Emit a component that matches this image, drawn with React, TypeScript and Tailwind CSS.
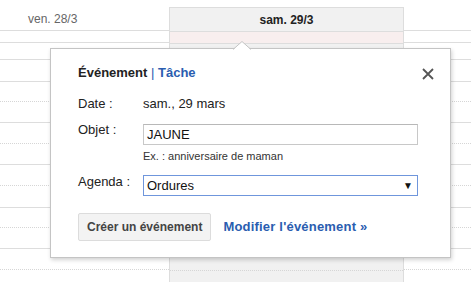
import React from "react";

const line = "border-b border-[#dddddd]";
const dotted = "border-b border-dotted border-[#d6d6d6]";

// grid rows under the header, heights tuned so lines fall on the screenshot's y
const rowClasses = [
  `h-[12px] ${line}`,
  `h-[17px] ${line}`,
  `h-[22px] ${line}`,
  `h-[20px] ${dotted}`,
  `h-[21px] ${line}`,
  `h-[21px] ${dotted}`,
  `h-[21px] ${line}`,
  `h-[21px] ${dotted}`,
  `h-[22px] ${line}`,
  `h-[20px] ${dotted}`,
  `h-[21px] ${line}`,
  `h-[21px] ${dotted}`,
];

function Rows({ selected }: { selected?: boolean }) {
  return (
    <>
      {rowClasses.map((c, i) => (
        <div
          key={i}
          className={
            c + (selected ? (i === 0 ? " bg-[#f8eeee]" : " bg-[#f1f1f1]") : "")
          }
        />
      ))}
      <div className={"flex-1" + (selected ? " bg-[#f1f1f1]" : "")} />
    </>
  );
}

function CalendarGrid() {
  return (
    <div className="flex h-[282px] w-[471px] text-[12px]">
      <div className="flex w-[169px] flex-col">
        <div className={`flex h-[31px] items-center pl-[28px] pt-[7px] text-[#666666] ${line}`}>
          ven. 28/3
        </div>
        <Rows />
      </div>
      <div className="flex w-[235px] flex-col pt-[7px]">
        <div className="flex flex-1 flex-col border-x border-t border-[#dddddd]">
          <div className={`flex h-[24px] items-center justify-center bg-[#f1f1f1] font-bold text-[#222222] ${line}`}>
            sam. 29/3
          </div>
          <Rows selected />
        </div>
      </div>
      <div className="flex flex-1 flex-col">
        <div className={`h-[31px] ${line}`} />
        <Rows />
      </div>
    </div>
  );
}

function EventBubble() {
  return (
    <div className="absolute left-[50px] top-[48px] w-[401px] border border-[#c4c4c4] bg-white pb-[16px] pl-[27px] pr-[32px] pt-[16px] text-[13px] text-[#222222] shadow-[1px_2px_4px_rgba(0,0,0,0.18)]">
      {/* little arrow pointing at the day column */}
      <svg
        className="absolute left-[182px] top-[-8px]"
        width="18"
        height="9"
        viewBox="0 0 18 9"
      >
        <polygon points="0,9 9,0.5 18,9" fill="white" />
        <polyline points="0,8.5 9,0.5 18,8.5" fill="none" stroke="#c4c4c4" strokeWidth="1" />
      </svg>

      <div className="flex h-[16px] items-center justify-between leading-[16px]">
        <div>
          <span className="font-bold">Événement</span>
          <span className="text-[#2a5db0]"> | </span>
          <span className="font-bold text-[#2a5db0]">Tâche</span>
        </div>
        <svg className="mr-[-16px] mt-[2px]" width="12" height="12" viewBox="0 0 12 12">
          <path d="M1 1 L11 11 M11 1 L1 11" stroke="#555555" strokeWidth="1.8" />
        </svg>
      </div>

      <div className="mt-[15px] flex h-[16px] items-center leading-[16px]">
        <div className="w-[65px]">Date :</div>
        <div>sam., 29 mars</div>
      </div>

      <div className="mt-[12px] flex items-start">
        <div className="mt-[-2px] w-[65px] leading-[16px]">Objet :</div>
        <div className="flex-1">
          <div className="flex h-[21px] w-[275px] items-center border border-[#c8c8c8] border-t-[#b8b8b8] px-[3px] text-[13px] text-[#111111]">
            JAUNE
          </div>
          <div className="mt-[5px] text-[11px] leading-[13px] text-[#333333]">
            Ex. : anniversaire de maman
          </div>
        </div>
      </div>

      <div className="mt-[12px] flex items-center">
        <div className="mt-[-8px] w-[65px] leading-[16px]">Agenda :</div>
        <div className="flex h-[21px] w-[275px] items-center justify-between border border-[#6f96dc] pl-[3px] pr-[4px] text-[13px] text-[#111111]">
          <span>Ordures</span>
          <span className="text-[10px] leading-none">▼</span>
        </div>
      </div>

      <div className="mt-[17px] flex items-center">
        <div className="flex h-[28px] items-center rounded-[2px] border border-[#dcdcdc] bg-[#f3f3f3] px-[8px] text-[12px] font-bold text-[#444444]">
          Créer un événement
        </div>
        <div className="ml-[12px] text-[13px] font-bold tracking-[0.2px] text-[#2a5db0]">
          Modifier l'événement »
        </div>
      </div>
    </div>
  );
}

export default function App() {
  return (
    <div
      className="relative h-[282px] w-[471px] overflow-hidden bg-white"
      style={{ fontFamily: '"Liberation Sans", Arial, sans-serif' }}
    >
      <CalendarGrid />
      <EventBubble />
    </div>
  );
}
